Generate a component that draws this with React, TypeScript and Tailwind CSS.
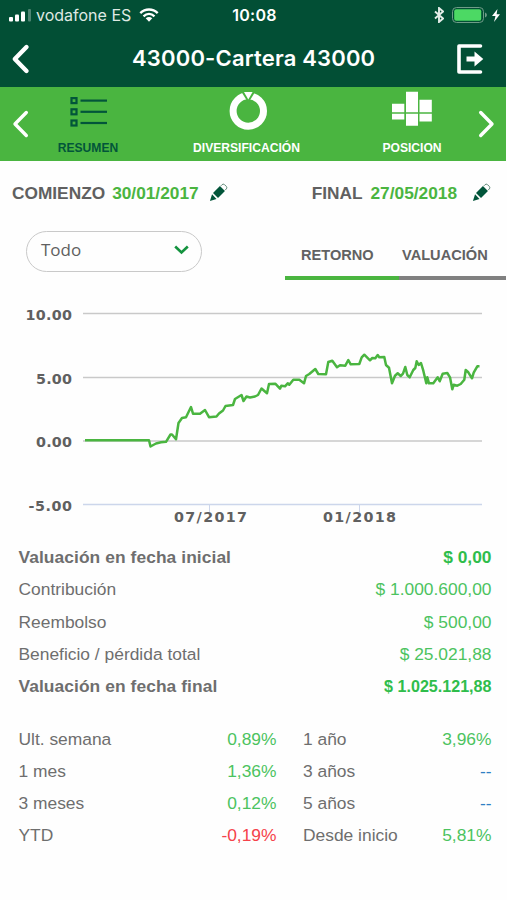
import clsx from "clsx";

const linePoints =
  "85,440.3 149,440.3 150.5,446.5 156,443.5 161,442.3 166,441.8 170.5,434.5 172,434.5 176,439.3 178.5,423 182,418 186,417.3 191,407 193,413.7 200,413.7 205,410 209,417.2 216.5,416.5 219,413.5 223,410.5 225.5,406 233,405 235,399 241.5,395 243.5,401 246.5,396.5 250,397.5 255,396.5 258,395 261.5,388.5 267,393.3 269,384 275.5,383.8 280,388.7 281.3,385.7 285,386.3 287.7,383.3 289.3,384.7 293.3,379.7 299.3,379.7 304,383.3 306,376 309.3,374 315.3,369 318.3,374 326,374.3 328.3,362 332.3,360.7 337,367.3 340,365.3 345.3,365.7 348.3,360 350.7,364.3 359.3,364 361.7,357.3 364.3,354.7 370,360.3 372.3,358 375.3,358.3 377.7,355 379.3,357.3 384.3,357 386,365 389,367.7 392,383.3 395,375.7 397.7,373.3 400.7,376 403,373.7 405.3,367 407.3,375 409.7,377.3 413.3,370 415.3,368 416.7,361.3 418.7,365 421,363 423.3,370.7 426.3,383.3 427.3,377.3 429,383.3 433.3,383.3 437.7,377.3 439.7,381.3 442.7,373.7 447.3,373 450,377.3 452.3,389.3 453.7,384.7 457.3,385.7 460.7,384 464.3,379.7 465.7,370 468.3,372.3 472,378.3 473.7,372.7 477.3,366.3 479.5,366.3";

const gridLines = [
  { label: "10.00", y: 313.5, x: 25.5, width: 46.5 },
  { label: "5.00", y: 377.5, x: 36, width: 36 },
  { label: "0.00", y: 441, x: 36, width: 36 },
  { label: "-5.00", y: 504.5, x: 28.5, width: 43.5 },
];

const summary = [
  { label: "Valuación en fecha inicial", value: "$ 0,00", bold: true },
  { label: "Contribución", value: "$ 1.000.600,00" },
  { label: "Reembolso", value: "$ 500,00" },
  { label: "Beneficio / pérdida total", value: "$ 25.021,88" },
  {
    label: "Valuación en fecha final",
    value: "$ 1.025.121,88",
    bold: true,
    small: true,
  },
];

const returns = [
  ["Ult. semana", "0,89%", "1 año", "3,96%"],
  ["1 mes", "1,36%", "3 años", "--"],
  ["3 meses", "0,12%", "5 años", "--"],
  ["YTD", "-0,19%", "Desde inicio", "5,81%"],
];

const valueColor = (value: string) => {
  if (value === "--") return "text-[#2f7fc4]";
  return value.startsWith("-") ? "text-[#f5424a]" : "text-[#4cc35f]";
};

const StatusBar = () => (
  <div className="grid h-[30px] grid-cols-[1fr_auto_1fr] items-center pl-[9px] pr-[6px] font-[Inter,sans-serif] text-[16px] text-white">
    <div className="flex items-center">
      <svg width="23" height="13" className="mr-[4px]" fill="#fff">
        <rect x="0" y="8" width="4" height="4.5" rx="1" />
        <rect x="6" y="5.5" width="4" height="7" rx="1" />
        <rect x="12" y="2.5" width="4" height="10" rx="1" />
        <rect x="19" y="0" width="3" height="12.5" rx="1" opacity=".3" />
      </svg>
      <span className="w-[103px] whitespace-nowrap text-[#dfe9e3]">
        vodafone ES
      </span>
      <svg width="20" height="14" viewBox="0 0 20 14" fill="none">
        <path
          d="M1.3 5.2C6.3.3 13.7.3 18.7 5.2M4.5 8.3c3.3-3 7.7-3 11 0"
          stroke="#fff"
          strokeWidth="2.4"
        />
        <path d="M6.7 10.3c2-1.7 4.6-1.7 6.6 0L10 13.7z" fill="#fff" />
      </svg>
    </div>
    <span className="font-semibold tracking-[0.3px]">10:08</span>
    <div className="flex items-center justify-end">
      <svg
        width="10"
        height="16"
        viewBox="0 0 10 16"
        className="mr-[8px]"
        fill="none"
        stroke="#e3ece7"
        strokeWidth="1.9"
      >
        <path d="M1 4.5l8 7L5 15V1l4 3.5-8 7" />
      </svg>
      <svg width="36" height="16" viewBox="0 0 36 16" className="mr-[4px]">
        <rect
          x=".5"
          y=".5"
          width="31"
          height="15"
          rx="4"
          fill="none"
          stroke="#6f9c88"
        />
        <rect x="2.2" y="2.2" width="27" height="11.6" rx="2" fill="#4cd964" />
        <path d="M33 5.5c2.5 1 2.5 4 0 5z" fill="#6f9c88" />
      </svg>
      <svg width="8" height="13" viewBox="0 0 8 13" fill="#fff">
        <path d="M5.5 0L0 7h3.5L2 13l6-7.7H4.6z" />
      </svg>
    </div>
  </div>
);

const Header = () => (
  <div className="grid h-[57px] grid-cols-[122px_1fr_49px] items-center text-white">
    <svg
      width="20"
      height="32"
      viewBox="0 0 20 32"
      className="ml-[10px]"
      fill="none"
      stroke="#fff"
      strokeWidth="4.4"
      strokeLinecap="round"
      strokeLinejoin="round"
    >
      <path d="M16.500 4L4.800 16l11.700 12" />
    </svg>
    <h1 className="pl-[10px] font-[Inter,sans-serif] text-[22px] font-semibold tracking-[0.18px]">
      43000-Cartera 43000
    </h1>
    <svg width="27" height="30" viewBox="0 0 27 30" fill="none">
      <path
        d="M23.500 2H2v26h21.500"
        stroke="#fff"
        strokeWidth="3.6"
        strokeLinecap="round"
        strokeLinejoin="round"
      />
      <path d="M9.500 12.500h8V7.500l8.800 7.500-8.800 7.500v-5h-8z" fill="#fff" />
    </svg>
  </div>
);

const NavArrow = (props: { right?: boolean }) => (
  <svg
    width="17"
    height="28"
    viewBox="0 0 17 28"
    className={clsx(props.right && "rotate-180")}
    fill="none"
    stroke="#fff"
    strokeWidth="3.4"
    strokeLinecap="round"
    strokeLinejoin="round"
  >
    <path d="M14.300 2.500L3 14l11.300 11.500" />
  </svg>
);

const NavBar = () => (
  <nav className="grid h-[74px] grid-cols-[29px_118px_199px_132px_28px] items-center bg-[#4ab540] text-[12.1px] font-bold text-white">
    <div className="flex justify-end">
      <NavArrow />
    </div>
    <div className="flex flex-col items-center gap-[3px] text-[#02553a]">
      <svg
        width="38"
        height="46"
        viewBox="0 0 38 46"
        stroke="#02553a"
        strokeWidth="2.2"
        fill="none"
      >
        {[6.1, 17.3, 28.5].map((y) => (
          <g key={y}>
            <rect x="2.5" y={y + 2} width="5" height="5" />
            <path d={`M11.5 ${y + 4.5}H38`} />
          </g>
        ))}
      </svg>
      <span>RESUMEN</span>
    </div>
    <div className="flex flex-col items-center gap-[3px]">
      <svg width="42" height="46" viewBox="0 0 42 46">
        <circle
          cx="22.300"
          cy="21"
          r="15.2"
          fill="none"
          stroke="#fff"
          strokeWidth="7"
        />
        <path d="M14.300 0h16l-8 13z" fill="#4ab540" />
        <path d="M18 2h8.600l-4.300 7.500z" fill="#fff" />
      </svg>
      <span>DIVERSIFICACIÓN</span>
    </div>
    <div className="flex flex-col items-center gap-[3px]">
      <svg width="40" height="46" viewBox="0 0 40 46" fill="#fff">
        <path d="M0 13.800h12.300v8.400H0zM0 23.800h12.300v5.700H0zM14 1.800h12v20.400H14zM14 23.800h12v12H14zM27.500 9.800h12.300v12.400H27.500zM27.500 23.800h12.300v7.700H27.500z" />
      </svg>
      <span>POSICION</span>
    </div>
    <NavArrow right />
  </nav>
);

const Pencil = () => (
  <svg width="19" height="19" viewBox="0 0 20 20" className="mb-[3px]">
    <path d="M1 19l2.200-7.200 4.700 5z" fill="#02553a" />
    <path d="M4.200 10.500l7.300-7.300 5.300 5.300-7.300 7.300z" fill="#02553a" />
    <path
      d="M12.500 3l1.300-1.300q1.200-1 2.500 0l2 2q1 1.300 0 2.500L17 7.500"
      fill="none"
      stroke="#547f6e"
    />
  </svg>
);

const DateRange = () => (
  <div className="flex h-[63px] items-center justify-between pl-[12px] pr-[16px] pt-[2px] text-[17.3px] font-bold text-[#606060]">
    <div className="flex items-center">
      <span>COMIENZO</span>
      <span className="ml-[7px] mr-[10px] text-[#4ab540]">30/01/2017</span>
      <Pencil />
    </div>
    <div className="flex items-center">
      <span>FINAL</span>
      <span className="ml-[8px] mr-[15px] text-[#4ab540]">27/05/2018</span>
      <Pencil />
    </div>
  </div>
);

const Filters = () => (
  <div className="flex h-[56px] items-start justify-between pl-[26px] pr-px pt-[7px]">
    <button className="flex h-[41px] w-[176px] items-center justify-between rounded-full border-[1.5px] border-[#c9c9c9] pb-[3px] pl-[14px] pr-[12px] font-['Open_Sans',sans-serif] text-[17px] font-medium text-[#606060]">
      Todo
      <svg width="15" height="10" viewBox="0 0 15 10" fill="none">
        <path d="M1.200 1.500l6.300 6 6.300-6" stroke="#14933f" strokeWidth="2.6" />
      </svg>
    </button>
    <div className="flex h-[49px] text-[14.6px] font-bold text-[#626262]">
      <div className="w-[114px] border-b-[4px] border-[#4ab540] pl-[16px] pt-[14px]">
        RETORNO
      </div>
      <div className="w-[107px] border-b-[4px] border-[#808080] pl-[3px] pt-[14px]">
        VALUACIÓN
      </div>
    </div>
  </div>
);

const Chart = () => (
  <svg
    width="507"
    height="260"
    viewBox="0 280 507 260"
    className="block font-['DejaVu_Sans',sans-serif] text-[14.3px] font-bold"
  >
    {gridLines.map((line) => (
      <g key={line.label}>
        <path
          d={`M83 ${line.y}H482`}
          stroke={line.label === "-5.00" ? "#ccd6eb" : "#c9c9c9"}
          strokeWidth="1.5"
        />
        <text x={line.x} y={line.y + 6} textLength={line.width} fill="#606060">
          {line.label}
        </text>
      </g>
    ))}
    <path d="M209.500 505v7M359.500 505v7" stroke="#ccd6eb" />
    <text x="174" y="522" textLength="73" fill="#606060">
      07/2017
    </text>
    <text x="323" y="522" textLength="73" fill="#606060">
      01/2018
    </text>
    <polyline
      points={linePoints}
      fill="none"
      stroke="#4ab540"
      strokeWidth="2.5"
      strokeLinejoin="round"
    />
  </svg>
);

const Summary = () => (
  <div className="flex flex-col pl-[18.5px] pr-[15.5px] pt-[1px]">
    {summary.map((row) => (
      <div
        key={row.label}
        className={clsx(
          "flex h-[32.3px] items-center justify-between",
          row.bold && "font-bold",
        )}
      >
        <span className={clsx(row.bold && "tracking-[0.07px]")}>
          {row.label}
        </span>
        <span
          className={clsx(
            row.bold ? "text-[#2fbd4b]" : "text-[#4cc35f]",
            row.small && "text-[16.1px]",
          )}
        >
          {row.value}
        </span>
      </div>
    ))}
  </div>
);

const Returns = () => (
  <div className="flex flex-col pl-[18.5px] pr-[15.5px] pt-[20.8px]">
    {returns.map(([label, value, longLabel, longValue]) => (
      <div
        key={label}
        className="grid h-[31.9px] grid-cols-[258px_1fr] items-center gap-x-[26.5px]"
      >
        <div className="flex justify-between">
          <span>{label}</span>
          <span className={valueColor(value)}>{value}</span>
        </div>
        <div className="flex justify-between">
          <span>{longLabel}</span>
          <span className={valueColor(longValue)}>{longValue}</span>
        </div>
      </div>
    ))}
  </div>
);

const App = () => {
  return (
    <div className="h-[900px] w-[507px] overflow-hidden bg-[#fefefe] font-['Liberation_Sans',Arial,sans-serif] text-[17.4px] text-[#6e6e6e]">
      <div className="w-[506px] bg-[#024f35]">
        <StatusBar />
        <Header />
        <NavBar />
      </div>
      <DateRange />
      <Filters />
      <Chart />
      <Summary />
      <Returns />
    </div>
  );
};

export default App;
